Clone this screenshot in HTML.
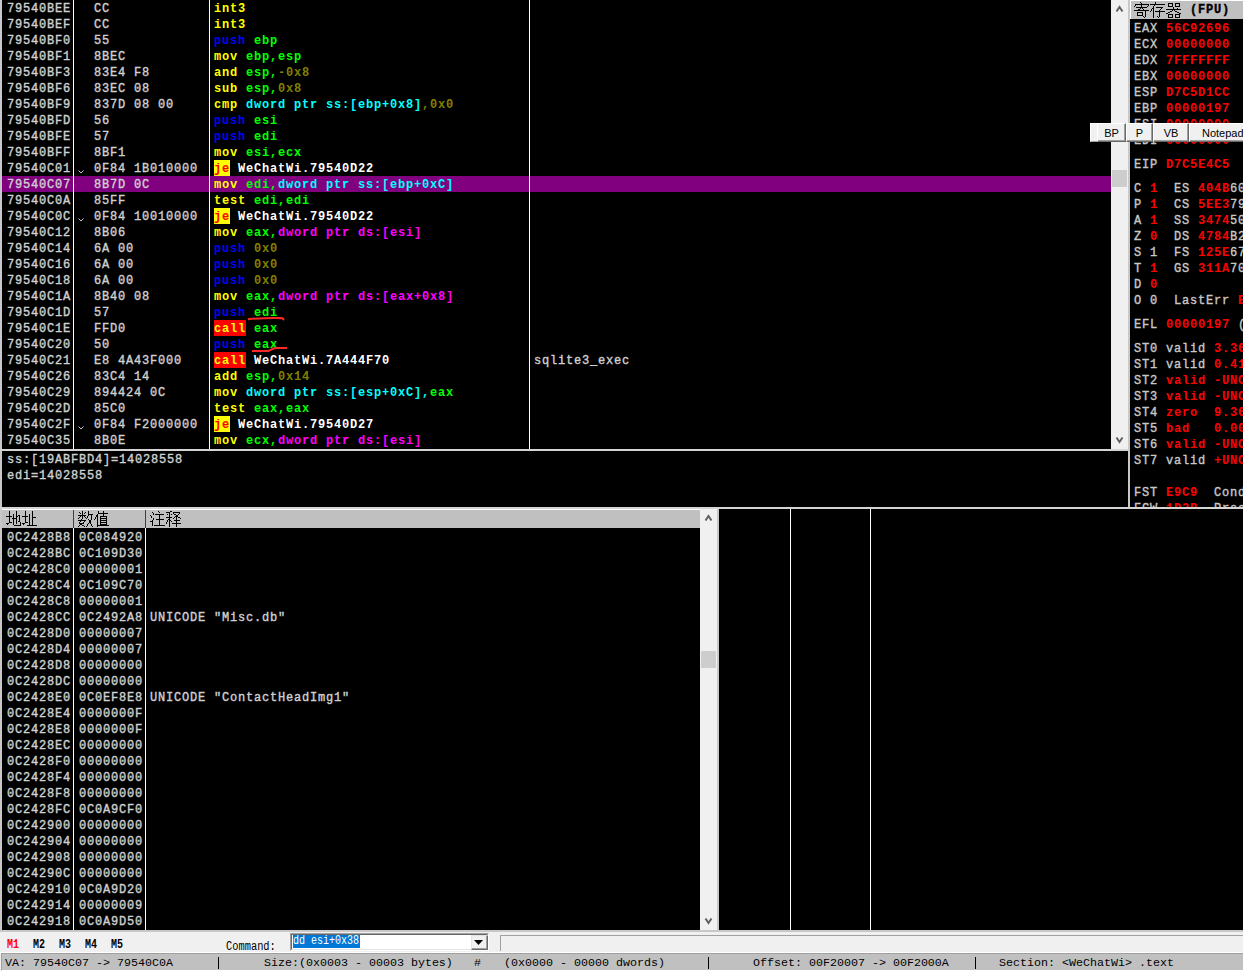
<!DOCTYPE html>
<html><head><meta charset="utf-8">
<style>
*{margin:0;padding:0;box-sizing:border-box}
html,body{width:1243px;height:971px;overflow:hidden;background:#F0F0F0;font-family:"Liberation Mono",monospace}
.abs{position:absolute}
.blk{position:absolute;background:#000}
.mono{font-family:"Liberation Mono",monospace;font-size:13.33px;line-height:16px;white-space:pre}
.r{position:absolute;left:0;height:16px;width:100%;font-family:"Liberation Mono",monospace;font-size:13.33px;line-height:16px;white-space:pre;color:#D0D0D0;-webkit-text-stroke:0.4px currentColor}
.c1,.c2,.c3,.c4{top:1px}
.c1,.c2,.c3,.c4,.m1,.m2,.m3,.rg{transform-origin:0 0;transform:scaleX(0.9);letter-spacing:0.889px}
.m1,.m2,.m3{top:2px}
.c1{position:absolute;left:7px}
.c2{position:absolute;left:94px}
.c3{position:absolute;left:214px;font-weight:bold;-webkit-text-stroke:0}
.c4{position:absolute;left:534px}
.je{background:#FFFF00;color:#FF0000}
.call{background:#FF0000;color:#FFFF00}
.chev{position:absolute;left:77px;top:9px;width:8px;height:6px}
.vl{position:absolute;width:1px;background:#FFFFFF}
.m1{position:absolute;left:7px}
.m2{position:absolute;left:79px}
.m3{position:absolute;left:150px}
.rg{position:absolute;font-family:"Liberation Mono",monospace;font-size:13.33px;line-height:16px;white-space:pre;-webkit-text-stroke:0.4px currentColor}
.b{font-weight:bold;-webkit-text-stroke:0}
.sb{position:absolute;background:#F0F0F0}
.thumb{position:absolute;background:#CDCDCD}
.hdr{position:absolute;background:#C0C0C0}
.st{position:absolute;font-family:"Liberation Mono",monospace;font-size:12.5px;line-height:14px;white-space:pre;color:#000;font-weight:bold;transform-origin:0 0;transform:scaleX(0.8)}
.sbt{position:absolute;top:956px;font-family:"Liberation Mono",monospace;font-size:11.67px;line-height:14px;white-space:pre;color:#000}
.btn{position:absolute;top:123px;height:19px;background:#F0F0F0;border-left:1px solid #FFF;border-top:1px solid #FFF;border-right:1px solid #696969;border-bottom:1px solid #696969;box-shadow:inset -1px -1px 0 #A0A0A0;font-family:"Liberation Sans",sans-serif;font-size:11px;line-height:19px;text-align:center;color:#000}
</style></head><body>
<!-- disasm pane -->
<div class="abs" style="left:0;top:0;width:2px;height:449px;background:#C8C8C8"></div>
<div class="blk" style="left:2px;top:0;width:1109px;height:449px;overflow:hidden">
  <div class="abs" style="left:-2px;top:0;width:1111px;height:449px">
  <div class="abs" style="left:2px;top:176px;width:1109px;height:16px;background:#800080"></div>
  <div class="vl" style="left:73px;top:0;height:449px"></div>
  <div class="vl" style="left:209px;top:0;height:449px"></div>
  <div class="vl" style="left:529px;top:0;height:449px"></div>
<div class="r" style="top:0px"><span class="c1">79540BEE</span><span class="c2">CC</span><span class="c3"><span style="color:#FFFF00">int3</span></span></div>
<div class="r" style="top:16px"><span class="c1">79540BEF</span><span class="c2">CC</span><span class="c3"><span style="color:#FFFF00">int3</span></span></div>
<div class="r" style="top:32px"><span class="c1">79540BF0</span><span class="c2">55</span><span class="c3"><span style="color:#0000FF">push</span><span style="color:#FFFFFF"> </span><span style="color:#00FF00">ebp</span></span></div>
<div class="r" style="top:48px"><span class="c1">79540BF1</span><span class="c2">8BEC</span><span class="c3"><span style="color:#FFFF00">mov</span><span style="color:#FFFFFF"> </span><span style="color:#00FF00">ebp,esp</span></span></div>
<div class="r" style="top:64px"><span class="c1">79540BF3</span><span class="c2">83E4 F8</span><span class="c3"><span style="color:#FFFF00">and</span><span style="color:#FFFFFF"> </span><span style="color:#00FF00">esp,</span><span style="color:#808000">-0x8</span></span></div>
<div class="r" style="top:80px"><span class="c1">79540BF6</span><span class="c2">83EC 08</span><span class="c3"><span style="color:#FFFF00">sub</span><span style="color:#FFFFFF"> </span><span style="color:#00FF00">esp,</span><span style="color:#808000">0x8</span></span></div>
<div class="r" style="top:96px"><span class="c1">79540BF9</span><span class="c2">837D 08 00</span><span class="c3"><span style="color:#FFFF00">cmp</span><span style="color:#FFFFFF"> </span><span style="color:#00FFFF">dword ptr ss:[ebp+0x8]</span><span style="color:#808000">,0x0</span></span></div>
<div class="r" style="top:112px"><span class="c1">79540BFD</span><span class="c2">56</span><span class="c3"><span style="color:#0000FF">push</span><span style="color:#FFFFFF"> </span><span style="color:#00FF00">esi</span></span></div>
<div class="r" style="top:128px"><span class="c1">79540BFE</span><span class="c2">57</span><span class="c3"><span style="color:#0000FF">push</span><span style="color:#FFFFFF"> </span><span style="color:#00FF00">edi</span></span></div>
<div class="r" style="top:144px"><span class="c1">79540BFF</span><span class="c2">8BF1</span><span class="c3"><span style="color:#FFFF00">mov</span><span style="color:#FFFFFF"> </span><span style="color:#00FF00">esi,ecx</span></span></div>
<div class="r" style="top:160px"><span class="c1">79540C01</span><svg class="chev" width="8" height="6"><path d="M1.5 1.5 L4 4 L6.5 1.5" fill="none" stroke="#C8C8C8" stroke-width="1"/></svg><span class="c2">0F84 1B010000</span><div class="abs" style="left:214px;top:0;width:16px;height:16px;background:#FFFF00"></div><span class="c3"><span style="color:#FF0000">je</span><span style="color:#FFFFFF"> WeChatWi.79540D22</span></span></div>
<div class="r" style="top:176px"><span class="c1">79540C07</span><span class="c2">8B7D 0C</span><span class="c3"><span style="color:#FFFF00">mov</span><span style="color:#FFFFFF"> </span><span style="color:#00FF00">edi,</span><span style="color:#00FFFF">dword ptr ss:[ebp+0xC]</span></span></div>
<div class="r" style="top:192px"><span class="c1">79540C0A</span><span class="c2">85FF</span><span class="c3"><span style="color:#FFFF00">test</span><span style="color:#FFFFFF"> </span><span style="color:#00FF00">edi,edi</span></span></div>
<div class="r" style="top:208px"><span class="c1">79540C0C</span><svg class="chev" width="8" height="6"><path d="M1.5 1.5 L4 4 L6.5 1.5" fill="none" stroke="#C8C8C8" stroke-width="1"/></svg><span class="c2">0F84 10010000</span><div class="abs" style="left:214px;top:0;width:16px;height:16px;background:#FFFF00"></div><span class="c3"><span style="color:#FF0000">je</span><span style="color:#FFFFFF"> WeChatWi.79540D22</span></span></div>
<div class="r" style="top:224px"><span class="c1">79540C12</span><span class="c2">8B06</span><span class="c3"><span style="color:#FFFF00">mov</span><span style="color:#FFFFFF"> </span><span style="color:#00FF00">eax,</span><span style="color:#FF00FF">dword ptr ds:[esi]</span></span></div>
<div class="r" style="top:240px"><span class="c1">79540C14</span><span class="c2">6A 00</span><span class="c3"><span style="color:#0000FF">push</span><span style="color:#FFFFFF"> </span><span style="color:#808000">0x0</span></span></div>
<div class="r" style="top:256px"><span class="c1">79540C16</span><span class="c2">6A 00</span><span class="c3"><span style="color:#0000FF">push</span><span style="color:#FFFFFF"> </span><span style="color:#808000">0x0</span></span></div>
<div class="r" style="top:272px"><span class="c1">79540C18</span><span class="c2">6A 00</span><span class="c3"><span style="color:#0000FF">push</span><span style="color:#FFFFFF"> </span><span style="color:#808000">0x0</span></span></div>
<div class="r" style="top:288px"><span class="c1">79540C1A</span><span class="c2">8B40 08</span><span class="c3"><span style="color:#FFFF00">mov</span><span style="color:#FFFFFF"> </span><span style="color:#00FF00">eax,</span><span style="color:#FF00FF">dword ptr ds:[eax+0x8]</span></span></div>
<div class="r" style="top:304px"><span class="c1">79540C1D</span><span class="c2">57</span><span class="c3"><span style="color:#0000FF">push</span><span style="color:#FFFFFF"> </span><span style="color:#00FF00">edi</span></span></div>
<div class="r" style="top:320px"><span class="c1">79540C1E</span><span class="c2">FFD0</span><div class="abs" style="left:214px;top:0;width:32px;height:16px;background:#FF0000"></div><span class="c3"><span style="color:#FFFF00">call</span><span style="color:#FFFFFF"> </span><span style="color:#00FF00">eax</span></span></div>
<div class="r" style="top:336px"><span class="c1">79540C20</span><span class="c2">50</span><span class="c3"><span style="color:#0000FF">push</span><span style="color:#FFFFFF"> </span><span style="color:#00FF00">eax</span></span></div>
<div class="r" style="top:352px"><span class="c1">79540C21</span><span class="c2">E8 4A43F000</span><div class="abs" style="left:214px;top:0;width:32px;height:16px;background:#FF0000"></div><span class="c3"><span style="color:#FFFF00">call</span><span style="color:#FFFFFF"> WeChatWi.7A444F70</span></span><span class="c4">sqlite3_exec</span></div>
<div class="r" style="top:368px"><span class="c1">79540C26</span><span class="c2">83C4 14</span><span class="c3"><span style="color:#FFFF00">add</span><span style="color:#FFFFFF"> </span><span style="color:#00FF00">esp,</span><span style="color:#808000">0x14</span></span></div>
<div class="r" style="top:384px"><span class="c1">79540C29</span><span class="c2">894424 0C</span><span class="c3"><span style="color:#FFFF00">mov</span><span style="color:#FFFFFF"> </span><span style="color:#00FFFF">dword ptr ss:[esp+0xC],</span><span style="color:#00FF00">eax</span></span></div>
<div class="r" style="top:400px"><span class="c1">79540C2D</span><span class="c2">85C0</span><span class="c3"><span style="color:#FFFF00">test</span><span style="color:#FFFFFF"> </span><span style="color:#00FF00">eax,eax</span></span></div>
<div class="r" style="top:416px"><span class="c1">79540C2F</span><svg class="chev" width="8" height="6"><path d="M1.5 1.5 L4 4 L6.5 1.5" fill="none" stroke="#C8C8C8" stroke-width="1"/></svg><span class="c2">0F84 F2000000</span><div class="abs" style="left:214px;top:0;width:16px;height:16px;background:#FFFF00"></div><span class="c3"><span style="color:#FF0000">je</span><span style="color:#FFFFFF"> WeChatWi.79540D27</span></span></div>
<div class="r" style="top:432px"><span class="c1">79540C35</span><span class="c2">8B0E</span><span class="c3"><span style="color:#FFFF00">mov</span><span style="color:#FFFFFF"> </span><span style="color:#00FF00">ecx,</span><span style="color:#FF00FF">dword ptr ds:[esi]</span></span></div>

  </div>
</div>
<!-- disasm scrollbar -->
<div class="sb" style="left:1111px;top:0;width:17px;height:449px">
  <svg class="abs" style="left:0;top:0" width="17" height="17"><path d="M5.5 11.5 L8.5 7 L11.5 11.5" fill="none" stroke="#606060" stroke-width="2"/></svg>
  <div class="thumb" style="left:1px;top:170px;width:15px;height:17px"></div>
  <svg class="abs" style="left:0;top:432px" width="17" height="17"><path d="M5.5 5.5 L8.5 10 L11.5 5.5" fill="none" stroke="#606060" stroke-width="2"/></svg>
</div>
<div class="abs" style="left:1128px;top:0;width:2px;height:509px;background:#C8C8C8"></div>
<div class="abs" style="left:0;top:449px;width:1128px;height:2px;background:#D4D4D4"></div>
<!-- info pane -->
<div class="abs" style="left:0;top:451px;width:2px;height:56px;background:#C8C8C8"></div>
<div class="blk" style="left:2px;top:451px;width:1126px;height:56px">
  <div class="r" style="top:0px"><span class="c1" style="left:5px">ss:[19ABFBD4]=14028558</span></div>
  <div class="r" style="top:16px"><span class="c1" style="left:5px">edi=14028558</span></div>
</div>
<!-- registers -->
<div class="blk" style="left:1130px;top:0;width:113px;height:507px;overflow:hidden">
  <div class="abs" style="left:0;top:0;width:113px;height:1px;background:#FFF"></div>
  <div class="abs" style="left:0;top:0;width:1px;height:19px;background:#FFF"></div>
  <div class="hdr" style="left:1px;top:1px;width:112px;height:18px"></div>
  <div class="rg" style="left:60px;top:2px;color:#000;font-weight:bold">(FPU)</div>
<span class="rg" style="top:21px;left:4px;color:#C8C8C8">EAX</span><span class="rg b" style="top:21px;left:36px;color:#FF0000">56C92696</span><span class="rg" style="top:37px;left:4px;color:#C8C8C8">ECX</span><span class="rg b" style="top:37px;left:36px;color:#FF0000">00000000</span><span class="rg" style="top:53px;left:4px;color:#C8C8C8">EDX</span><span class="rg b" style="top:53px;left:36px;color:#FF0000">7FFFFFFF</span><span class="rg" style="top:69px;left:4px;color:#C8C8C8">EBX</span><span class="rg b" style="top:69px;left:36px;color:#FF0000">00000000</span><span class="rg" style="top:85px;left:4px;color:#C8C8C8">ESP</span><span class="rg b" style="top:85px;left:36px;color:#FF0000">D7C5D1CC</span><span class="rg" style="top:101px;left:4px;color:#C8C8C8">EBP</span><span class="rg b" style="top:101px;left:36px;color:#FF0000">00000197</span><span class="rg" style="top:117px;left:4px;color:#C8C8C8">ESI</span><span class="rg b" style="top:117px;left:36px;color:#FF0000">00000000</span><span class="rg" style="top:133px;left:4px;color:#C8C8C8">EDI</span><span class="rg b" style="top:133px;left:36px;color:#FF0000">00000000</span><span class="rg" style="top:157px;left:4px;color:#C8C8C8">EIP</span><span class="rg b" style="top:157px;left:36px;color:#FF0000">D7C5E4C5</span><span class="rg" style="top:181px;left:4px;color:#C8C8C8">C</span><span class="rg b" style="top:181px;left:20px;color:#FF0000">1</span><span class="rg" style="top:181px;left:44px;color:#C8C8C8">ES</span><span class="rg" style="top:181px;left:68px;color:#C8C8C8">404B60</span><span class="rg b" style="top:181px;left:68px;color:#FF0000;width:36px;overflow:hidden;background:#000;height:16px">404B6</span><span class="rg" style="top:197px;left:4px;color:#C8C8C8">P</span><span class="rg b" style="top:197px;left:20px;color:#FF0000">1</span><span class="rg" style="top:197px;left:44px;color:#C8C8C8">CS</span><span class="rg" style="top:197px;left:68px;color:#C8C8C8">5EE379</span><span class="rg b" style="top:197px;left:68px;color:#FF0000;width:36px;overflow:hidden;background:#000;height:16px">5EE37</span><span class="rg" style="top:213px;left:4px;color:#C8C8C8">A</span><span class="rg b" style="top:213px;left:20px;color:#FF0000">1</span><span class="rg" style="top:213px;left:44px;color:#C8C8C8">SS</span><span class="rg" style="top:213px;left:68px;color:#C8C8C8">347450</span><span class="rg b" style="top:213px;left:68px;color:#FF0000;width:36px;overflow:hidden;background:#000;height:16px">34745</span><span class="rg" style="top:229px;left:4px;color:#C8C8C8">Z</span><span class="rg b" style="top:229px;left:20px;color:#FF0000">0</span><span class="rg" style="top:229px;left:44px;color:#C8C8C8">DS</span><span class="rg" style="top:229px;left:68px;color:#C8C8C8">4784B2</span><span class="rg b" style="top:229px;left:68px;color:#FF0000;width:36px;overflow:hidden;background:#000;height:16px">4784B</span><span class="rg" style="top:245px;left:4px;color:#C8C8C8">S</span><span class="rg" style="top:245px;left:20px;color:#C8C8C8">1</span><span class="rg" style="top:245px;left:44px;color:#C8C8C8">FS</span><span class="rg" style="top:245px;left:68px;color:#C8C8C8">125E67</span><span class="rg b" style="top:245px;left:68px;color:#FF0000;width:36px;overflow:hidden;background:#000;height:16px">125E6</span><span class="rg" style="top:261px;left:4px;color:#C8C8C8">T</span><span class="rg b" style="top:261px;left:20px;color:#FF0000">1</span><span class="rg" style="top:261px;left:44px;color:#C8C8C8">GS</span><span class="rg" style="top:261px;left:68px;color:#C8C8C8">311A70</span><span class="rg b" style="top:261px;left:68px;color:#FF0000;width:36px;overflow:hidden;background:#000;height:16px">311A7</span><span class="rg" style="top:277px;left:4px;color:#C8C8C8">D</span><span class="rg b" style="top:277px;left:20px;color:#FF0000">0</span><span class="rg" style="top:293px;left:4px;color:#C8C8C8">O</span><span class="rg" style="top:293px;left:20px;color:#C8C8C8">0</span><span class="rg" style="top:293px;left:44px;color:#C8C8C8">LastErr</span><span class="rg b" style="top:293px;left:108px;color:#FF0000">E</span><span class="rg" style="top:317px;left:4px;color:#C8C8C8">EFL</span><span class="rg b" style="top:317px;left:36px;color:#FF0000">00000197</span><span class="rg" style="top:317px;left:108px;color:#C8C8C8">(</span><span class="rg" style="top:341px;left:4px;color:#C8C8C8">ST0</span><span class="rg" style="top:341px;left:36px;color:#C8C8C8">valid</span><span class="rg b" style="top:341px;left:84px;color:#FF0000">3.36</span><span class="rg" style="top:357px;left:4px;color:#C8C8C8">ST1</span><span class="rg" style="top:357px;left:36px;color:#C8C8C8">valid</span><span class="rg b" style="top:357px;left:84px;color:#FF0000">0.41</span><span class="rg" style="top:373px;left:4px;color:#C8C8C8">ST2</span><span class="rg b" style="top:373px;left:36px;color:#FF0000">valid</span><span class="rg b" style="top:373px;left:84px;color:#FF0000">-UNO</span><span class="rg" style="top:389px;left:4px;color:#C8C8C8">ST3</span><span class="rg b" style="top:389px;left:36px;color:#FF0000">valid</span><span class="rg b" style="top:389px;left:84px;color:#FF0000">-UNO</span><span class="rg" style="top:405px;left:4px;color:#C8C8C8">ST4</span><span class="rg b" style="top:405px;left:36px;color:#FF0000">zero</span><span class="rg b" style="top:405px;left:84px;color:#FF0000">9.36</span><span class="rg" style="top:421px;left:4px;color:#C8C8C8">ST5</span><span class="rg b" style="top:421px;left:36px;color:#FF0000">bad</span><span class="rg b" style="top:421px;left:84px;color:#FF0000">0.00</span><span class="rg" style="top:437px;left:4px;color:#C8C8C8">ST6</span><span class="rg b" style="top:437px;left:36px;color:#FF0000">valid</span><span class="rg b" style="top:437px;left:84px;color:#FF0000">-UNO</span><span class="rg" style="top:453px;left:4px;color:#C8C8C8">ST7</span><span class="rg" style="top:453px;left:36px;color:#C8C8C8">valid</span><span class="rg b" style="top:453px;left:84px;color:#FF0000">+UNO</span><span class="rg" style="top:485px;left:4px;color:#C8C8C8">FST</span><span class="rg b" style="top:485px;left:36px;color:#FF0000">E9C9</span><span class="rg" style="top:485px;left:84px;color:#C8C8C8">Cond</span><span class="rg" style="top:501px;left:4px;color:#C8C8C8">FCW</span><span class="rg b" style="top:501px;left:36px;color:#FF0000">1D2B</span><span class="rg" style="top:501px;left:84px;color:#C8C8C8">Prec</span>
</div>
<div class="abs" style="left:0;top:507px;width:1243px;height:2px;background:#D4D4D4"></div>
<!-- memory pane -->
<div class="abs" style="left:0;top:509px;width:2px;height:421px;background:#C8C8C8"></div>
<div class="blk" style="left:2px;top:509px;width:698px;height:421px;overflow:hidden">
  <div class="abs" style="left:-2px;top:0;width:700px;height:421px">
  <div class="abs" style="left:2px;top:0;width:698px;height:1px;background:#FFF"></div>
  <div class="hdr" style="left:2px;top:1px;width:698px;height:18px"></div>
  <div class="abs" style="left:73px;top:1px;width:1px;height:18px;background:#404040"></div>
  <div class="abs" style="left:145px;top:1px;width:1px;height:18px;background:#404040"></div>
  <div class="vl" style="left:73px;top:19px;height:402px"></div>
  <div class="vl" style="left:145px;top:19px;height:402px"></div>
  <div class="abs" style="left:0;top:19px;width:700px;height:402px">
<div class="r" style="top:0px"><span class="m1">0C2428B8</span><span class="m2">0C084920</span></div>
<div class="r" style="top:16px"><span class="m1">0C2428BC</span><span class="m2">0C109D30</span></div>
<div class="r" style="top:32px"><span class="m1">0C2428C0</span><span class="m2">00000001</span></div>
<div class="r" style="top:48px"><span class="m1">0C2428C4</span><span class="m2">0C109C70</span></div>
<div class="r" style="top:64px"><span class="m1">0C2428C8</span><span class="m2">00000001</span></div>
<div class="r" style="top:80px"><span class="m1">0C2428CC</span><span class="m2">0C2492A8</span><span class="m3">UNICODE "Misc.db"</span></div>
<div class="r" style="top:96px"><span class="m1">0C2428D0</span><span class="m2">00000007</span></div>
<div class="r" style="top:112px"><span class="m1">0C2428D4</span><span class="m2">00000007</span></div>
<div class="r" style="top:128px"><span class="m1">0C2428D8</span><span class="m2">00000000</span></div>
<div class="r" style="top:144px"><span class="m1">0C2428DC</span><span class="m2">00000000</span></div>
<div class="r" style="top:160px"><span class="m1">0C2428E0</span><span class="m2">0C0EF8E8</span><span class="m3">UNICODE "ContactHeadImg1"</span></div>
<div class="r" style="top:176px"><span class="m1">0C2428E4</span><span class="m2">0000000F</span></div>
<div class="r" style="top:192px"><span class="m1">0C2428E8</span><span class="m2">0000000F</span></div>
<div class="r" style="top:208px"><span class="m1">0C2428EC</span><span class="m2">00000000</span></div>
<div class="r" style="top:224px"><span class="m1">0C2428F0</span><span class="m2">00000000</span></div>
<div class="r" style="top:240px"><span class="m1">0C2428F4</span><span class="m2">00000000</span></div>
<div class="r" style="top:256px"><span class="m1">0C2428F8</span><span class="m2">00000000</span></div>
<div class="r" style="top:272px"><span class="m1">0C2428FC</span><span class="m2">0C0A9CF0</span></div>
<div class="r" style="top:288px"><span class="m1">0C242900</span><span class="m2">00000000</span></div>
<div class="r" style="top:304px"><span class="m1">0C242904</span><span class="m2">00000000</span></div>
<div class="r" style="top:320px"><span class="m1">0C242908</span><span class="m2">00000000</span></div>
<div class="r" style="top:336px"><span class="m1">0C24290C</span><span class="m2">00000000</span></div>
<div class="r" style="top:352px"><span class="m1">0C242910</span><span class="m2">0C0A9D20</span></div>
<div class="r" style="top:368px"><span class="m1">0C242914</span><span class="m2">00000009</span></div>
<div class="r" style="top:384px"><span class="m1">0C242918</span><span class="m2">0C0A9D50</span></div>

  </div>
  </div>
</div>
<div class="sb" style="left:700px;top:509px;width:17px;height:421px">
  <svg class="abs" style="left:0;top:0" width="17" height="17"><path d="M5.5 11.5 L8.5 7 L11.5 11.5" fill="none" stroke="#606060" stroke-width="2"/></svg>
  <div class="thumb" style="left:1px;top:142px;width:15px;height:17px"></div>
  <svg class="abs" style="left:0;top:404px" width="17" height="17"><path d="M5.5 5.5 L8.5 10 L11.5 5.5" fill="none" stroke="#606060" stroke-width="2"/></svg>
</div>
<div class="abs" style="left:717px;top:509px;width:2px;height:421px;background:#C8C8C8"></div>
<!-- stack pane -->
<div class="blk" style="left:719px;top:509px;width:524px;height:421px">
  <div class="vl" style="left:71px;top:0;height:421px"></div>
  <div class="vl" style="left:151px;top:0;height:421px"></div>
</div>
<!-- bottom toolbar -->
<div class="abs" style="left:0;top:930px;width:1243px;height:23px;background:#F0F0F0;border-top:2px solid #C8C8C8;border-bottom:1px solid #FFF"></div>
<div class="st" style="left:7px;top:938px;color:#FF0000">M1</div>
<div class="st" style="left:33px;top:938px">M2</div>
<div class="st" style="left:59px;top:938px">M3</div>
<div class="st" style="left:85px;top:938px">M4</div>
<div class="st" style="left:111px;top:938px">M5</div>
<div class="st" style="left:226px;top:940px;font-weight:normal;transform:scaleX(0.83)">Command:</div>
<div class="abs" style="left:290px;top:933px;width:199px;height:18px;background:#FFF;border-top:1px solid #A0A0A0;border-left:1px solid #A0A0A0;border-right:1px solid #FFF;border-bottom:1px solid #FFF"></div>
<div class="abs" style="left:291px;top:934px;width:197px;height:16px;border-top:1px solid #696969;border-left:1px solid #696969;border-right:1px solid #E3E3E3;border-bottom:1px solid #E3E3E3"></div>
<div class="abs" style="left:293px;top:935px;width:67px;height:13px;background:#0078D7"></div>
<div class="st" style="left:293px;top:934px;color:#FFF;font-weight:normal;transform:scaleX(0.8)">dd esi+0x38</div>
<div class="abs" style="left:471px;top:935px;width:17px;height:15px;background:#F0F0F0;border-top:1px solid #E3E3E3;border-left:1px solid #E3E3E3;border-right:1px solid #696969;border-bottom:1px solid #696969;box-shadow:inset -1px -1px 0 #A0A0A0"></div>
<svg class="abs" style="left:474px;top:940px" width="9" height="6"><path d="M0 0H9L4.5 5Z" fill="#000"/></svg>
<div class="abs" style="left:500px;top:935px;width:743px;height:16px;background:#F0F0F0;border-top:1px solid #A0A0A0;border-left:1px solid #A0A0A0"></div>
<!-- status bar -->
<div class="abs" style="left:1px;top:953px;width:1242px;height:18px;background:#C0C0C0;border-top:1px solid #A0A0A0;border-left:1px solid #A0A0A0;border-bottom:1px solid #FFF"></div>
<div class="sbt" style="left:5px">VA: 79540C07 -> 79540C0A</div>
<div class="abs" style="left:218px;top:957px;width:1px;height:12px;background:#000"></div>
<div class="sbt" style="left:264px">Size:(0x0003 - 00003 bytes)</div>
<div class="sbt" style="left:474px">#</div>
<div class="sbt" style="left:504px">(0x0000 - 00000 dwords)</div>
<div class="abs" style="left:708px;top:957px;width:1px;height:12px;background:#000"></div>
<div class="sbt" style="left:753px">Offset: 00F20007 -> 00F2000A</div>
<div class="abs" style="left:975px;top:957px;width:1px;height:12px;background:#000"></div>
<div class="sbt" style="left:999px">Section: &lt;WeChatWi&gt; .text</div>
<!-- red underlines -->
<svg class="abs" style="left:240px;top:310px" width="60" height="50"><path d="M8 9.2 C 16 8.5, 24 8, 34.6 7.9 S 42 8.5, 44.2 9.8" fill="none" stroke="#FF2828" stroke-width="2"/><path d="M12 41 L 27.8 41 C 30 41, 32 38.3, 36 38.1 L 47 37.9" fill="none" stroke="#FF2828" stroke-width="2"/></svg>
<!-- floating toolbar -->
<div class="abs" style="left:1090px;top:123px;width:153px;height:19px;background:#F0F0F0;border-top:1px solid #FFF;border-left:1px solid #FFF;border-bottom:1px solid #A0A0A0"></div>
<div class="btn" style="left:1097px;width:29px">BP</div>
<div class="btn" style="left:1126px;width:27px">P</div>
<div class="btn" style="left:1153px;width:36px">VB</div>
<div class="btn" style="left:1189px;width:60px;text-align:left;padding-left:12px">Notepad</div>
<svg class="abs" style="left:1130px;top:0px" width="60" height="19" shape-rendering="crispEdges"><path d="M10 2h1v1h-1zM25 2h1v1h-1zM11 3h1v1h-1zM25 3h1v1h-1zM38 3h5v1h-5zM45 3h5v1h-5zM5 4h14v1h-14zM20 4h15v1h-15zM38 4h1v1h-1zM42 4h1v1h-1zM45 4h1v1h-1zM49 4h1v1h-1zM5 5h1v1h-1zM11 5h1v1h-1zM18 5h1v1h-1zM24 5h1v1h-1zM38 5h1v1h-1zM42 5h1v1h-1zM45 5h1v1h-1zM49 5h1v1h-1zM4 6h1v1h-1zM11 6h1v1h-1zM17 6h1v1h-1zM23 6h1v1h-1zM38 6h5v1h-5zM45 6h5v1h-5zM6 7h11v1h-11zM23 7h1v1h-1zM26 7h7v1h-7zM43 7h1v1h-1zM10 8h1v1h-1zM12 8h1v1h-1zM22 8h2v1h-2zM31 8h1v1h-1zM43 8h1v1h-1zM47 8h1v1h-1zM8 9h2v1h-2zM13 9h1v1h-1zM21 9h1v1h-1zM23 9h1v1h-1zM30 9h1v1h-1zM36 9h15v1h-15zM4 10h15v1h-15zM21 10h1v1h-1zM23 10h1v1h-1zM29 10h1v1h-1zM42 10h1v1h-1zM44 10h1v1h-1zM15 11h1v1h-1zM20 11h1v1h-1zM23 11h1v1h-1zM25 11h10v1h-10zM40 11h2v1h-2zM45 11h2v1h-2zM7 12h6v1h-6zM15 12h1v1h-1zM23 12h1v1h-1zM29 12h1v1h-1zM38 12h2v1h-2zM47 12h2v1h-2zM7 13h1v1h-1zM12 13h1v1h-1zM15 13h1v1h-1zM23 13h1v1h-1zM29 13h1v1h-1zM36 13h2v1h-2zM49 13h2v1h-2zM7 14h1v1h-1zM12 14h1v1h-1zM15 14h1v1h-1zM23 14h1v1h-1zM29 14h1v1h-1zM38 14h5v1h-5zM45 14h5v1h-5zM7 15h6v1h-6zM15 15h1v1h-1zM23 15h1v1h-1zM29 15h1v1h-1zM38 15h1v1h-1zM42 15h1v1h-1zM45 15h1v1h-1zM49 15h1v1h-1zM13 16h1v1h-1zM15 16h1v1h-1zM23 16h1v1h-1zM27 16h1v1h-1zM29 16h1v1h-1zM38 16h1v1h-1zM42 16h1v1h-1zM45 16h1v1h-1zM49 16h1v1h-1zM14 17h1v1h-1zM23 17h1v1h-1zM28 17h1v1h-1zM38 17h5v1h-5zM45 17h5v1h-5z" fill="#000"/></svg><svg class="abs" style="left:0px;top:508px" width="190" height="20" shape-rendering="crispEdges"><path d="M9 3h1v1h-1zM16 3h1v1h-1zM25 3h1v1h-1zM32 3h1v1h-1zM82 3h1v1h-1zM88 3h1v1h-1zM98 3h1v1h-1zM103 3h1v1h-1zM158 3h1v1h-1zM170 3h2v1h-2zM9 4h1v1h-1zM16 4h1v1h-1zM25 4h1v1h-1zM32 4h1v1h-1zM79 4h1v1h-1zM82 4h1v1h-1zM85 4h1v1h-1zM88 4h1v1h-1zM98 4h1v1h-1zM103 4h1v1h-1zM152 4h1v1h-1zM159 4h1v1h-1zM166 4h4v1h-4zM173 4h7v1h-7zM9 5h1v1h-1zM16 5h1v1h-1zM25 5h1v1h-1zM32 5h1v1h-1zM80 5h1v1h-1zM82 5h1v1h-1zM84 5h1v1h-1zM88 5h1v1h-1zM98 5h10v1h-10zM153 5h1v1h-1zM169 5h1v1h-1zM173 5h1v1h-1zM179 5h1v1h-1zM9 6h1v1h-1zM13 6h1v1h-1zM16 6h1v1h-1zM25 6h1v1h-1zM29 6h1v1h-1zM32 6h1v1h-1zM82 6h1v1h-1zM88 6h5v1h-5zM97 6h1v1h-1zM103 6h1v1h-1zM153 6h1v1h-1zM155 6h9v1h-9zM167 6h1v1h-1zM169 6h1v1h-1zM171 6h1v1h-1zM174 6h2v1h-2zM178 6h1v1h-1zM9 7h1v1h-1zM13 7h1v1h-1zM16 7h1v1h-1zM18 7h2v1h-2zM25 7h1v1h-1zM29 7h1v1h-1zM32 7h1v1h-1zM78 7h8v1h-8zM88 7h1v1h-1zM91 7h1v1h-1zM96 7h2v1h-2zM103 7h1v1h-1zM150 7h1v1h-1zM159 7h1v1h-1zM169 7h1v1h-1zM176 7h2v1h-2zM6 8h6v1h-6zM13 8h1v1h-1zM16 8h2v1h-2zM19 8h1v1h-1zM22 8h6v1h-6zM29 8h1v1h-1zM32 8h1v1h-1zM80 8h1v1h-1zM82 8h1v1h-1zM84 8h1v1h-1zM87 8h1v1h-1zM91 8h1v1h-1zM96 8h2v1h-2zM100 8h7v1h-7zM151 8h1v1h-1zM159 8h1v1h-1zM169 8h1v1h-1zM175 8h3v1h-3zM9 9h1v1h-1zM13 9h1v1h-1zM16 9h1v1h-1zM19 9h1v1h-1zM25 9h1v1h-1zM29 9h1v1h-1zM32 9h4v1h-4zM79 9h1v1h-1zM82 9h1v1h-1zM85 9h1v1h-1zM87 9h1v1h-1zM91 9h1v1h-1zM95 9h1v1h-1zM97 9h1v1h-1zM100 9h1v1h-1zM106 9h1v1h-1zM151 9h1v1h-1zM159 9h1v1h-1zM166 9h6v1h-6zM174 9h1v1h-1zM176 9h1v1h-1zM178 9h2v1h-2zM9 10h1v1h-1zM12 10h5v1h-5zM19 10h1v1h-1zM25 10h1v1h-1zM29 10h1v1h-1zM32 10h1v1h-1zM78 10h1v1h-1zM82 10h1v1h-1zM86 10h1v1h-1zM91 10h1v1h-1zM95 10h1v1h-1zM97 10h1v1h-1zM100 10h7v1h-7zM153 10h1v1h-1zM159 10h1v1h-1zM169 10h1v1h-1zM173 10h1v1h-1zM176 10h1v1h-1zM180 10h1v1h-1zM9 11h1v1h-1zM13 11h1v1h-1zM16 11h1v1h-1zM19 11h1v1h-1zM25 11h1v1h-1zM29 11h1v1h-1zM32 11h1v1h-1zM81 11h1v1h-1zM88 11h1v1h-1zM91 11h1v1h-1zM94 11h1v1h-1zM97 11h1v1h-1zM100 11h1v1h-1zM106 11h1v1h-1zM153 11h1v1h-1zM156 11h8v1h-8zM168 11h2v1h-2zM176 11h1v1h-1zM9 12h1v1h-1zM13 12h1v1h-1zM16 12h1v1h-1zM19 12h1v1h-1zM25 12h1v1h-1zM29 12h1v1h-1zM32 12h1v1h-1zM78 12h8v1h-8zM89 12h2v1h-2zM97 12h1v1h-1zM100 12h7v1h-7zM152 12h1v1h-1zM159 12h1v1h-1zM167 12h1v1h-1zM169 12h2v1h-2zM174 12h6v1h-6zM9 13h1v1h-1zM13 13h1v1h-1zM16 13h1v1h-1zM18 13h2v1h-2zM25 13h1v1h-1zM29 13h1v1h-1zM32 13h1v1h-1zM80 13h1v1h-1zM84 13h1v1h-1zM89 13h2v1h-2zM97 13h1v1h-1zM100 13h1v1h-1zM106 13h1v1h-1zM150 13h3v1h-3zM159 13h1v1h-1zM167 13h1v1h-1zM169 13h1v1h-1zM171 13h1v1h-1zM176 13h1v1h-1zM9 14h3v1h-3zM13 14h1v1h-1zM16 14h1v1h-1zM20 14h1v1h-1zM25 14h3v1h-3zM29 14h1v1h-1zM32 14h1v1h-1zM79 14h1v1h-1zM83 14h1v1h-1zM89 14h2v1h-2zM97 14h1v1h-1zM100 14h7v1h-7zM152 14h1v1h-1zM159 14h1v1h-1zM166 14h1v1h-1zM169 14h1v1h-1zM176 14h1v1h-1zM6 15h3v1h-3zM13 15h1v1h-1zM16 15h1v1h-1zM20 15h1v1h-1zM22 15h3v1h-3zM29 15h1v1h-1zM32 15h1v1h-1zM79 15h5v1h-5zM88 15h1v1h-1zM90 15h1v1h-1zM97 15h1v1h-1zM100 15h1v1h-1zM106 15h1v1h-1zM152 15h1v1h-1zM159 15h1v1h-1zM166 15h1v1h-1zM169 15h1v1h-1zM172 15h9v1h-9zM7 16h1v1h-1zM13 16h1v1h-1zM20 16h1v1h-1zM23 16h1v1h-1zM29 16h1v1h-1zM32 16h1v1h-1zM80 16h2v1h-2zM87 16h1v1h-1zM91 16h1v1h-1zM97 16h1v1h-1zM100 16h7v1h-7zM152 16h1v1h-1zM159 16h1v1h-1zM169 16h1v1h-1zM176 16h1v1h-1zM14 17h7v1h-7zM27 17h10v1h-10zM79 17h1v1h-1zM82 17h2v1h-2zM87 17h1v1h-1zM91 17h1v1h-1zM97 17h12v1h-12zM152 17h1v1h-1zM154 17h11v1h-11zM169 17h1v1h-1zM176 17h1v1h-1zM78 18h1v1h-1zM84 18h1v1h-1zM86 18h1v1h-1zM92 18h1v1h-1zM97 18h1v1h-1zM169 18h1v1h-1zM176 18h1v1h-1z" fill="#000"/></svg>
</body></html>
